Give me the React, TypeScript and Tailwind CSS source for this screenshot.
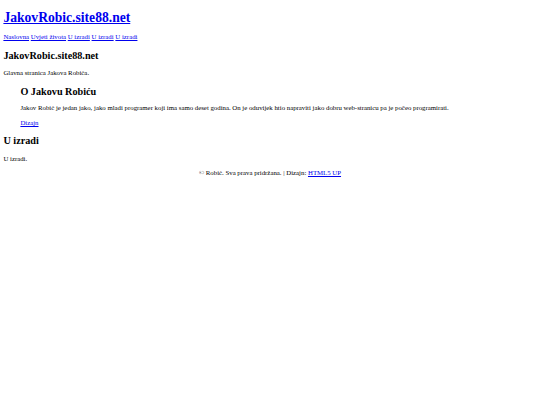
export default function App() {
  const link = "text-[#0000ee] underline";
  return (
    <div className="bg-white min-h-[405px] pl-[3.4px] pr-[3.4px] pt-[10px] text-black text-[6.8px] leading-[1.15]" style={{ fontFamily: '"Liberation Serif", "Times New Roman", serif' }}>
      <h1 className="text-[13.6px] font-bold leading-[1.15]">
        <a href="#" className={link}>JakovRobic.site88.net</a>
      </h1>
      <nav className="mt-[7.8px]">
        <a href="#" className={link}>Naslovna</a>{" "}
        <a href="#" className={link}>Uvjeti života</a>{" "}
        <a href="#" className={link}>U izradi</a>{" "}
        <a href="#" className={link}>U izradi</a>{" "}
        <a href="#" className={link}>U izradi</a>
      </nav>
      <h2 className="mt-[8.6px] text-[10.2px] font-bold leading-[1.15]">JakovRobic.site88.net</h2>
      <p className="mt-[7px]">Glavna stranica Jakova Robića.</p>
      <div className="ml-[17px]">
        <h2 className="mt-[10px] text-[10.2px] font-bold leading-[1.15]">O Jakovu Robiću</h2>
        <p className="mt-[6px]">Jakov Robić je jedan jako, jako mladi programer koji ima samo deset godina. On je oduvijek htio napraviti jako dobru web-stranicu pa je počeo programirati.</p>
        <p className="mt-[7.6px]">
          <a href="#" className={link}>Dizajn</a>
        </p>
      </div>
      <h2 className="mt-[7.7px] text-[10.2px] font-bold leading-[1.15]">U izradi</h2>
      <p className="mt-[8.4px]">U izradi.</p>
      <p className="mt-[6.5px] text-center">
        © Robić. Sva prava pridržana. | Dizajn: <a href="#" className={link}>HTML5 UP</a>
      </p>
    </div>
  );
}
